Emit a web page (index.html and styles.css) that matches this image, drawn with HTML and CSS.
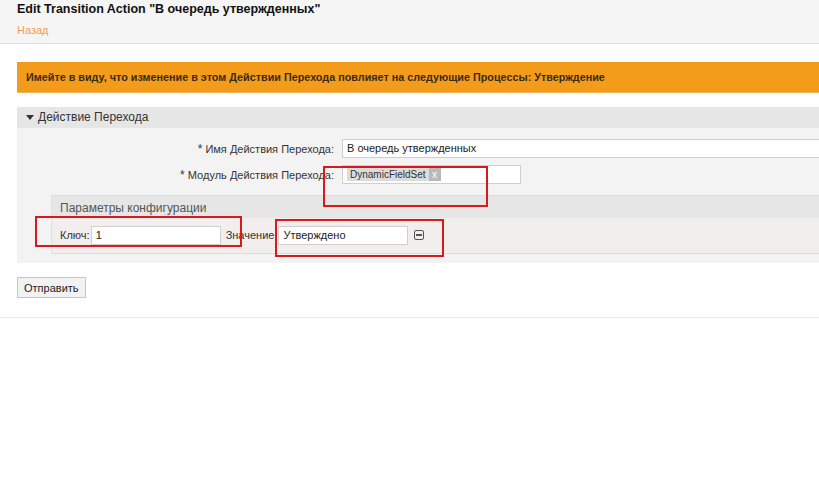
FILE: index.html
```html
<!DOCTYPE html>
<html lang="ru">
<head>
<meta charset="utf-8">
<title>Edit Transition Action</title>
<link rel="stylesheet" href="styles.css">
</head>
<body>
<div class="header">
  <h1>Edit Transition Action "В очередь утвержденных"</h1>
  <a class="back" href="#">Назад</a>
</div>
<div class="main">
  <div class="notice">Имейте в виду, что изменение в этом Действии Перехода повлияет на следующие Процессы: Утверждение</div>
  <div class="section">
    <div class="section-head"><span class="tri"></span>Действие Перехода</div>
    <div class="section-body">
      <div class="row">
        <label class="lbl"><span class="star">*</span> Имя Действия Перехода:</label>
        <div class="field wide">В очередь утвержденных</div>
      </div>
      <div class="row">
        <label class="lbl"><span class="star">*</span> Модуль Действия Перехода:</label>
        <div class="field narrow"><span class="tag">DynamicFieldSet<span class="tag-x">x</span></span></div>
      </div>
      <div class="sub">
        <div class="sub-head">Параметры конфигурации</div>
        <div class="sub-body">
          <span class="sl">Ключ:</span>
          <div class="field small">1</div>
          <span class="sl">Значение:</span>
          <div class="field small">Утверждено</div>
          <span class="minus"></span>
        </div>
      </div>
    </div>
  </div>
  <button class="btn">Отправить</button>
</div>
<div class="rule"></div>
<div class="mark m1"></div>
<div class="mark m2"></div>
<div class="mark m3"></div>
</body>
</html>
```
FILE: styles.css
```css
html, body { margin: 0; padding: 0; background: #fff; }
body { font-family: "Liberation Sans", Arial, sans-serif; font-size: 12px; color: #333; position: relative; min-height: 497px; overflow: hidden; }
.header { background: #f5f5f5; height: 43px; border-bottom: 1px solid #e2e2e2; padding: 0 17px; box-sizing: content-box; }
.header h1 { margin: 0; padding-top: 2px; font-size: 12.5px; font-weight: bold; color: #111; line-height: 15px; }
.back { display: block; margin-top: 7px; color: #f3a04f; text-decoration: none; font-size: 11px; line-height: 13px; }
.main { padding: 18px 0 0 17px; }
.notice { background: #f39c1c; height: 31px; line-height: 31px; padding-left: 9px; font-weight: bold; color: #3a2a12; font-size: 10.8px; border-bottom: 1px solid #f1b35c; box-sizing: border-box; }
.section { margin-top: 14px; }
.section-head { background: #e6e6e6; height: 21px; line-height: 21px; padding-left: 9px; color: #333; font-size: 12px; display: flex; align-items: center; }
.tri { width: 0; height: 0; border-left: 4px solid transparent; border-right: 4px solid transparent; border-top: 5px solid #333; margin-right: 4px; }
.section-body { background: #f3f3f3; padding: 11px 0 9px 0; }
.row { display: flex; align-items: center; margin-bottom: 7px; height: 19px; }
.lbl { width: 317px; text-align: right; padding-right: 8px; color: #333; font-size: 11px; }
.star { font-size: 12px; }
.field { background: #fff; border: 1px solid #cfcfcf; height: 19px; box-sizing: border-box; line-height: 17px; padding-left: 4px; color: #222; font-size: 11px; }
.wide { flex: 1; border-right: none; }
.narrow { width: 179px; padding-top: 2px; line-height: 13px; }
.tag { display: inline-flex; align-items: center; background: #dcdcdc; color: #333; font-size: 10px; padding-left: 3px; height: 13px; }
.tag-x { background: #b9b9b9; color: #fff; margin-left: 3px; width: 12px; text-align: center; font-size: 10px; line-height: 13px; }
.sub { margin: 11px 0 0 34px; border-top: 1px solid #dcdcdc; border-left: 1px solid #e0e0e0; border-bottom: 1px solid #dcdcdc; }
.sub-head { background: #e6e6e6; height: 22px; line-height: 24px; padding-left: 8px; color: #555; font-size: 12px; }
.sub-body { background: #f1eeed; height: 35px; display: flex; align-items: center; padding-left: 8px; padding-bottom: 1px; box-sizing: border-box; }
.sl { color: #333; font-size: 11px; margin-right: 1px; }
.small { width: 130px; height: 19px; margin-right: 5px; }
.minus { width: 10px; height: 10px; border: 1px solid #555; border-radius: 2px; box-sizing: border-box; position: relative; margin-left: 1px; }
.minus::after { content: ""; position: absolute; left: 1px; right: 1px; top: 3px; height: 2px; background: #555; }
.btn { margin-top: 14px; font-family: "Liberation Sans", Arial, sans-serif; font-size: 11px; color: #222; background: #f2f2f2; border: 1px solid #c6c6c6; height: 21px; padding: 0 6px; cursor: pointer; }
.rule { margin-top: 19px; border-top: 1px solid #ebebeb; }
.mark { position: absolute; border: 2px solid #d81a1a; box-sizing: border-box; }
.m1 { left: 35px; top: 216px; width: 207px; height: 31px; }
.m2 { left: 275px; top: 219px; width: 169px; height: 38px; }
.m3 { left: 323px; top: 166px; width: 165px; height: 41px; }
```
